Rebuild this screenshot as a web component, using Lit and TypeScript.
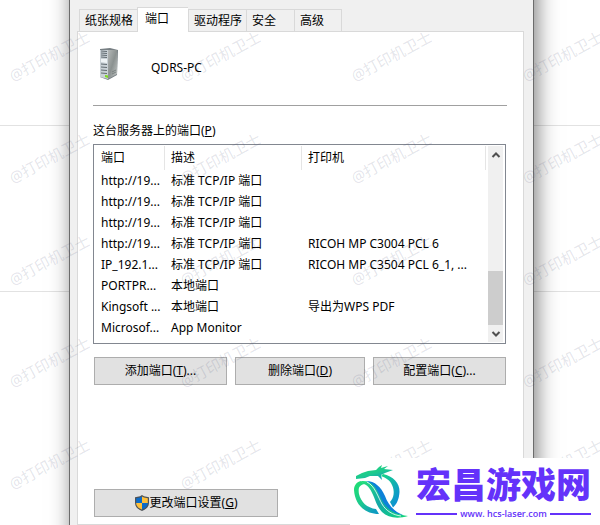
import { LitElement, html, css, svg } from "lit";
import { customElement, state } from "lit/decorators.js";
import { classMap } from "lit/directives/class-map.js";

interface Port {
  name: string;
  description: string;
  printer: string;
}

const TABS = ["纸张规格", "端口", "驱动程序", "安全", "高级"];

const PORTS: Port[] = [
  { name: "http://19...", description: "标准 TCP/IP 端口", printer: "" },
  { name: "http://19...", description: "标准 TCP/IP 端口", printer: "" },
  { name: "http://19...", description: "标准 TCP/IP 端口", printer: "" },
  { name: "http://19...", description: "标准 TCP/IP 端口", printer: "RICOH MP C3004 PCL 6" },
  { name: "IP_192.1...", description: "标准 TCP/IP 端口", printer: "RICOH MP C3504 PCL 6_1, ..." },
  { name: "PORTPR...", description: "本地端口", printer: "" },
  { name: "Kingsoft ...", description: "本地端口", printer: "导出为WPS PDF" },
  { name: "Microsof...", description: "App Monitor", printer: "" },
];

const chevron = (d: string) => html`
  <svg width="10" height="8" viewBox="0 0 10 8" aria-hidden="true">
    <path d=${d} fill="none" stroke="#505050" stroke-width="2"></path>
  </svg>
`;

@customElement("port-list")
export class PortList extends LitElement {
  static styles = css`
    :host {
      display: flex;
      border: 1px solid #828790;
      background: #fff;
      padding: 1px 2px 1px 0;
    }
    .table {
      flex: 1;
      min-width: 0;
      table-layout: fixed;
      border-collapse: separate;
      border-spacing: 0;
      align-self: flex-start;
    }
    .name {
      width: 71px;
    }
    .description {
      width: 137px;
    }
    th,
    td {
      box-sizing: border-box;
      padding: 0 0 0 6px;
      text-align: left;
      font-weight: 400;
      white-space: nowrap;
      overflow: hidden;
      height: 21px;
      line-height: 20px;
    }
    th:first-child,
    td:first-child {
      padding-left: 7px;
    }
    th {
      height: 24px;
      border-right: 1px solid #e5e5e5;
    }
    .scrollbar {
      display: flex;
      flex-direction: column;
      width: 15px;
      margin-left: 2px;
      background: #f0f0f0;
    }
    .arrow {
      display: grid;
      place-items: center;
      height: 17px;
      padding: 0;
      border: 0;
      background: none;
    }
    .track {
      flex: 1;
      display: flex;
      flex-direction: column;
      justify-content: flex-end;
    }
    .thumb {
      height: 54px;
      background: #cdcdcd;
    }
  `;

  render() {
    return html`
      <table class="table" aria-label="端口">
        <thead>
          <tr>
            <th class="name" scope="col">端口</th>
            <th class="description" scope="col">描述</th>
            <th scope="col">打印机</th>
          </tr>
        </thead>
        <tbody>
          ${PORTS.map(
            (p) => html`<tr>
              <td>${p.name}</td>
              <td>${p.description}</td>
              <td>${p.printer}</td>
            </tr>`
          )}
        </tbody>
      </table>
      <div class="scrollbar">
        <button class="arrow" aria-label="向上滚动">${chevron("M1.5 6L5 2.5L8.5 6")}</button>
        <div class="track"><div class="thumb"></div></div>
        <button class="arrow" aria-label="向下滚动">${chevron("M1.5 2L5 5.5L8.5 2")}</button>
      </div>
    `;
  }
}

@customElement("site-badge")
export class SiteBadge extends LitElement {
  static styles = css`
    :host {
      display: flex;
      box-sizing: border-box;
      width: 250px;
      height: 67px;
      padding: 6px 10px 0 2px;
      gap: 8px;
      background: #fff;
      color: #6432fa;
    }
    .dragon {
      flex: none;
    }
    .words {
      flex: 1;
    }
    .name {
      font: 900 35px/38px "Noto Sans CJK SC", sans-serif;
      white-space: nowrap;
    }
    .site {
      display: flex;
      align-items: center;
      gap: 3px;
      margin-top: 5px;
      font: 600 9px/13px "Open Sans", sans-serif;
      white-space: nowrap;
    }
    .rule {
      flex: 1;
      height: 2px;
      background: #6432fa;
    }
  `;

  render() {
    return html`
      <svg class="dragon" width="56" height="56" viewBox="0 0 56 56" aria-hidden="true">
        <defs>
          <linearGradient id="ring" x1="0" y1="0" x2="1" y2="1">
            <stop offset="0" stop-color="#18d884"></stop>
            <stop offset="0.5" stop-color="#10b0b0"></stop>
            <stop offset="1" stop-color="#0c84e0"></stop>
          </linearGradient>
          <linearGradient id="crescent" x1="0" y1="0" x2="0.7" y2="1">
            <stop offset="0" stop-color="#20e070"></stop>
            <stop offset="0.6" stop-color="#1cc890"></stop>
            <stop offset="1" stop-color="#0f9cc0"></stop>
          </linearGradient>
          <linearGradient id="ribbon" x1="0" y1="0" x2="1" y2="1">
            <stop offset="0" stop-color="#24e07c"></stop>
            <stop offset="0.5" stop-color="#12a8a8"></stop>
            <stop offset="1" stop-color="#14d878"></stop>
          </linearGradient>
        </defs>
        <path d="M4 12L10 9L16 7L24 6L27 3L30 1L29 4L36 2L32 5L41 6L33 9L29 11L30 16L26 12L18 12L13 14L4 15Z" fill="url(#crescent)"></path>
        <path d="M31 10C41 12 48 19 47.500 28C47 35 45 40 41 43.500L38 38C42 34 43 27 40 21C38 16 34 14 29 12Z" fill="url(#ring)"></path>
        <path d="M9 17C4 18 2 22 2 26C3 40 12 50 27 50L24 45C15 44 9 38 7 30C6 24 7 21 13 20Z" fill="url(#crescent)"></path>
        <path d="M14 17C23 17 29 23 33 32C36 40 41 47 51 51L42 50C33 46 30 38 26 31C23 25 20 20 14 17Z" fill="#0c82d8"></path>
        <path d="M9 17C19 16 24 23 28 32C33 43 39 50 56 52C46 55 36 54 30 48C22 40 22 24 12 20Z" fill="url(#ribbon)"></path>
        <path d="M15 18C23 22 26 33 30 40C34 47 41 51 49 52" fill="none" stroke="#fff" stroke-width="0.8"></path>
      </svg>
      <div class="words">
        <div class="name">宏昌游戏网</div>
        <div class="site">
          <span class="rule"></span><span>www. hcs-laser.com</span><span class="rule"></span>
        </div>
      </div>
    `;
  }
}

@customElement("app-root")
export class AppRoot extends LitElement {
  static styles = css`
    :host {
      display: block;
      position: relative;
      overflow: hidden;
      min-height: 100vh;
      color: #000;
      font: 12px/16px "Noto Sans", "Noto Sans CJK SC", sans-serif;
      background:
        linear-gradient(#e2e2e2, #e2e2e2) 0 125px / 100% 1px no-repeat,
        linear-gradient(#e2e2e2, #e2e2e2) 0 291px / 100% 1px no-repeat,
        #fff;
    }
    button {
      font: inherit;
      color: inherit;
    }
    .page {
      display: flex;
      min-height: 100vh;
      padding: 0 66px 0 69px;
      box-sizing: border-box;
    }
    .dialog {
      flex: 1;
      min-width: 0;
      display: flex;
      flex-direction: column;
      margin: -30px 0;
      padding: 37px 9px 30px 7px;
      border: 1px solid #6c6c6c;
      border-width: 0 1px;
      background: #f0f0f0;
      box-shadow: 3px 0 20px rgba(0, 0, 0, 0.5);
    }
    .tabs {
      display: flex;
      align-items: flex-end;
      padding-left: 2px;
    }
    .tab {
      box-sizing: border-box;
      min-width: 48px;
      height: 22px;
      padding: 0 4px 0 5px;
      border: 1px solid #d9d9d9;
      border-width: 1px 0 0 1px;
      background: #f0f0f0;
      text-align: left;
    }
    .tab:last-child {
      border-right-width: 1px;
    }
    .tab.active {
      position: relative;
      min-width: 51px;
      height: 25px;
      margin-bottom: -1px;
      padding: 0 7px 3px;
      background: #fff;
    }
    .panel {
      flex: 1;
      display: flex;
      flex-direction: column;
      padding: 14px 16px 7px 15px;
      border: 1px solid #d9d9d9;
      background: #fff;
    }
    .server {
      display: flex;
      align-items: flex-end;
      gap: 26px;
      padding: 0 0 23px 4px;
      border-bottom: 1px solid #a0a0a0;
    }
    .host {
      padding-bottom: 6px;
    }
    .label {
      margin: 17px 0 5px;
    }
    .list {
      height: 196px;
      margin-right: 1px;
    }
    .actions {
      display: grid;
      grid-template-columns: 133fr 130fr 133fr;
      gap: 8px;
      margin: 13px 1px 0;
    }
    .button {
      display: flex;
      align-items: center;
      justify-content: center;
      gap: 1px;
      box-sizing: border-box;
      height: 28px;
      padding: 0;
      border: 1px solid #adadad;
      background: #e1e1e1;
      white-space: nowrap;
    }
    .settings {
      width: 184px;
      margin: auto 0 0 1px;
    }
    .watermarks {
      position: absolute;
      inset: 5px auto auto -36px;
      display: grid;
      grid-template-columns: repeat(4, 171px);
      grid-auto-rows: 102px;
      place-items: center;
      color: rgba(60, 70, 110, 0.14);
      font-size: 15px;
      pointer-events: none;
    }
    .watermark {
      transform: rotate(-28deg);
      white-space: nowrap;
    }
    .badge {
      position: absolute;
      right: 0;
      bottom: 0;
    }
  `;

  @state() private active = 1;

  private serverIcon() {
    return html`
      <svg width="28" height="36" viewBox="0 0 28 36" aria-hidden="true">
        <defs>
          <linearGradient id="side" x1="0" y1="0" x2="1" y2="1">
            <stop offset="0" stop-color="#b5b9b8"></stop>
            <stop offset="0.5" stop-color="#8b9190"></stop>
            <stop offset="1" stop-color="#c3c7c6"></stop>
          </linearGradient>
        </defs>
        <path d="M3 3L13 2L21 4L20 29L11 34L3 31Z" fill="#777f83"></path>
        <path d="M11 4L20 4L20 28L11 33Z" fill="url(#side)"></path>
        <path d="M3 4L11 4L11 33L3 31Z" fill="#c9d1d6"></path>
        <path d="M4 13H10V17L4 16Z" fill="#eef3f5"></path>
        ${[5, 7, 9, 11, 18, 21, 24, 27].map(
          (y) => svg`<path d="M4 ${y}L10 ${y + 0.5}" stroke="#626c72" stroke-width="1"></path>`
        )}
        <path d="M8 29L11 29.5V32L8 31Z" fill="#7edb20"></path>
        <path d="M15 26L19 24M15 28L19 26" stroke="#6f7776" stroke-width="0.8"></path>
      </svg>
    `;
  }

  private shieldIcon() {
    return html`
      <svg width="14" height="16" viewBox="0 0 14 16" aria-hidden="true">
        <path d="M7 0L9 1.3L14 2.2V8C14 12 10.5 14.6 7 16C3.5 14.6 0 12 0 8V2.2L5 1.3Z" fill="#4e5358"></path>
        <path d="M7 1.4V8H1.2V3.2L5 2.5Z" fill="#0c6bc8"></path>
        <path d="M7 1.4V8H12.8V3.2L9 2.5Z" fill="#ffc03a"></path>
        <path d="M7 8V14.6C4 13.4 1.2 11.5 1.2 8Z" fill="#ffc03a"></path>
        <path d="M7 8V14.6C10 13.4 12.8 11.5 12.8 8Z" fill="#0c6bc8"></path>
      </svg>
    `;
  }

  render() {
    return html`
      <main class="page">
        <section class="dialog">
          <div class="tabs" role="tablist">
            ${TABS.map(
              (label, i) => html`<button
                role="tab"
                aria-selected=${i === this.active}
                class=${classMap({ tab: true, active: i === this.active })}
                @click=${() => (this.active = i)}
              >${label}</button>`
            )}
          </div>
          <div class="panel" role="tabpanel">
            <div class="server">${this.serverIcon()}<span class="host">QDRS-PC</span></div>
            <div class="label">这台服务器上的端口(<u>P</u>)</div>
            <port-list class="list"></port-list>
            <div class="actions">
              <button class="button"><span>添加端口(<u>T</u>)...</span></button>
              <button class="button"><span>删除端口(<u>D</u>)</span></button>
              <button class="button"><span>配置端口(<u>C</u>)...</span></button>
            </div>
            <button class="button settings">
              ${this.shieldIcon()}<span>更改端口设置(<u>G</u>)</span>
            </button>
          </div>
        </section>
      </main>
      <div class="watermarks" aria-hidden="true">
        ${Array.from({ length: 20 }, () => html`<span class="watermark">@打印机卫士</span>`)}
      </div>
      <site-badge class="badge"></site-badge>
    `;
  }
}
